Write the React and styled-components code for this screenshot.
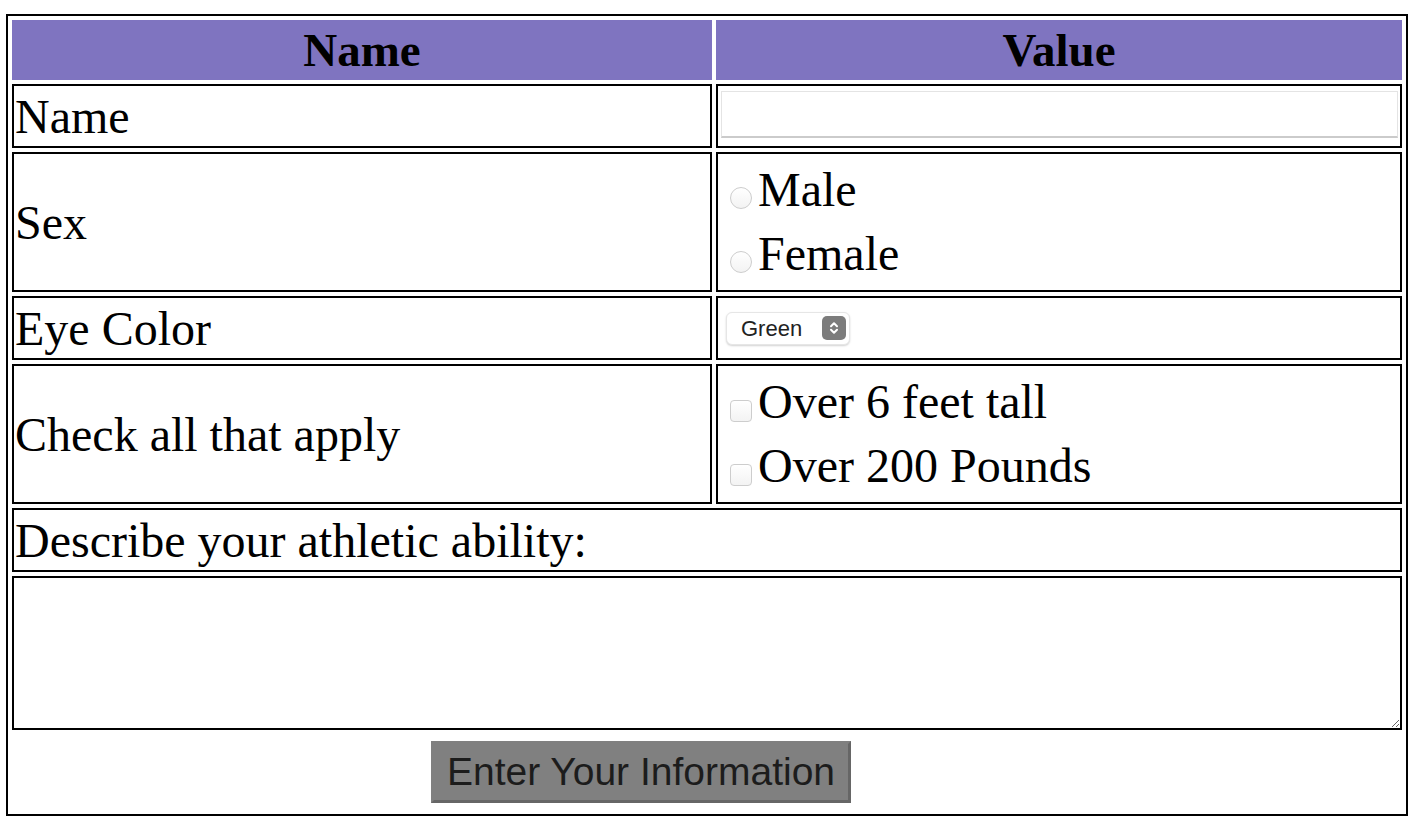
import React from 'react';
import styled, { createGlobalStyle } from 'styled-components';

const GlobalStyle = createGlobalStyle`
  body {
    margin: 0;
    background: #fff;
    font-family: "Liberation Serif", "Times New Roman", serif;
  }
`;

const ArrowIcon = () => (
  <svg width="12" height="16" viewBox="0 0 12 16" fill="none">
    <path d="M3 6.2 6 3.2 9 6.2" stroke="#fff" strokeWidth="2" strokeLinecap="round" strokeLinejoin="round" />
    <path d="M3 9.8 6 12.8 9 9.8" stroke="#fff" strokeWidth="2" strokeLinecap="round" strokeLinejoin="round" />
  </svg>
);

const App = () => {
  return (
    <>
      <GlobalStyle />
      <Form onSubmit={(e) => e.preventDefault()}>
        <Table>
          <colgroup>
            <Col $w={700} />
            <Col />
          </colgroup>
          <tbody>
            <Row $h={60}>
              <HeadCell>Name</HeadCell>
              <HeadCell>Value</HeadCell>
            </Row>
            <Row $h={64}>
              <Cell>Name</Cell>
              <Cell>
                <TextInput type="text" />
              </Cell>
            </Row>
            <Row $h={140}>
              <Cell>Sex</Cell>
              <Cell>
                <Choice>
                  <Radio name="sex" value="male" />Male
                </Choice>
                <Choice>
                  <Radio name="sex" value="female" />Female
                </Choice>
              </Cell>
            </Row>
            <Row $h={64}>
              <Cell>Eye Color</Cell>
              <Cell>
                <SelectWrap>
                  <Select defaultValue="Green">
                    <option>Blue</option>
                    <option>Brown</option>
                    <option>Green</option>
                    <option>Hazel</option>
                  </Select>
                  <Stepper>
                    <ArrowIcon />
                  </Stepper>
                </SelectWrap>
              </Cell>
            </Row>
            <Row $h={140}>
              <Cell>Check all that apply</Cell>
              <Cell>
                <Choice>
                  <Check name="tall" />Over 6 feet tall
                </Choice>
                <Choice>
                  <Check name="heavy" />Over 200 Pounds
                </Choice>
              </Cell>
            </Row>
            <Row $h={64}>
              <Cell colSpan={2}>Describe your athletic ability:</Cell>
            </Row>
            <Row $h={154}>
              <Cell colSpan={2} $bare>
                <TextArea />
              </Cell>
            </Row>
            <Row $h={76}>
              <Cell colSpan={2} $bare>
                <SubmitButton>Enter Your Information</SubmitButton>
              </Cell>
            </Row>
          </tbody>
        </Table>
      </Form>
    </>
  );
};

export default App;

const Form = styled.form`
  padding: 14px 0 0 6px;
  margin: 0;
`;

const Table = styled.table`
  box-sizing: border-box;
  width: 1402px;
  border: 2px solid #000;
  border-spacing: 4px;
  table-layout: fixed;
  font-family: "Liberation Serif", "Times New Roman", serif;
  font-size: 48px;
  color: #000;
`;

const Col = styled.col`
  width: ${(p) => (p.$w ? `${p.$w}px` : 'auto')};
`;

const Row = styled.tr`
  height: ${(p) => p.$h}px;
`;

const HeadCell = styled.th`
  background: #7f74c0;
  padding: 1px;
  font-weight: 700;
  font-size: 47px;
  text-align: center;
  vertical-align: middle;
`;

const Cell = styled.td`
  border: ${(p) => (p.$bare ? 'none' : '2px solid #000')};
  padding: ${(p) => (p.$bare ? '0' : '1px')};
  vertical-align: middle;
  white-space: nowrap;
`;

const TextInput = styled.input`
  display: block;
  box-sizing: border-box;
  width: 677px;
  height: 47px;
  margin: 0 0 3px 2px;
  border: 1px solid #e4e4e4;
  border-bottom: 2px solid #cbcbcb;
  background: #fff;
  outline: none;
  font-size: 20px;
`;

const Choice = styled.label`
  display: block;
  height: 64px;
  line-height: 64px;
`;

const Radio = styled.input.attrs({ type: 'radio' })`
  appearance: none;
  box-sizing: border-box;
  width: 22px;
  height: 22px;
  margin: 0 6px 0 11px;
  border: 1px solid #cdcdcd;
  border-radius: 50%;
  background: linear-gradient(#ffffff, #f3f3f3);
  vertical-align: -3px;
`;

const Check = styled.input.attrs({ type: 'checkbox' })`
  appearance: none;
  box-sizing: border-box;
  width: 22px;
  height: 22px;
  margin: 0 6px 0 11px;
  border: 1px solid #cdcdcd;
  border-radius: 4px;
  background: linear-gradient(#ffffff, #f3f3f3);
  vertical-align: -4px;
`;

const SelectWrap = styled.div`
  position: relative;
  display: flex;
  width: 124px;
  margin-left: 7px;
`;

const Select = styled.select`
  appearance: none;
  box-sizing: border-box;
  width: 124px;
  height: 33px;
  padding: 0 0 0 14px;
  border: 1px solid #e6e6e6;
  border-radius: 6px;
  background: #fff;
  box-shadow: 0 1px 2px rgba(0, 0, 0, 0.18);
  font-family: "Liberation Sans", Arial, sans-serif;
  font-size: 22px;
  color: #222;
  outline: none;
`;

const Stepper = styled.span`
  position: absolute;
  top: 4px;
  right: 4px;
  width: 24px;
  height: 24px;
  border-radius: 5px;
  background: #7c7c7c;
  display: flex;
  align-items: center;
  justify-content: center;
  pointer-events: none;
`;

const TextArea = styled.textarea`
  display: block;
  box-sizing: border-box;
  width: 100%;
  height: 154px;
  margin: 0;
  padding: 2px;
  border: 2px solid #000;
  resize: both;
  font-size: 16px;
  outline: none;
`;

const SubmitButton = styled.button.attrs({ type: 'submit' })`
  display: block;
  box-sizing: border-box;
  width: 420px;
  height: 62px;
  margin-left: 419px;
  padding: 0;
  border-style: solid;
  border-width: 3px;
  border-color: #808080 #666 #666 #808080;
  background: #808080;
  color: #1c1c1c;
  font-family: "Liberation Sans", Arial, sans-serif;
  font-size: 39px;
  cursor: pointer;
`;
